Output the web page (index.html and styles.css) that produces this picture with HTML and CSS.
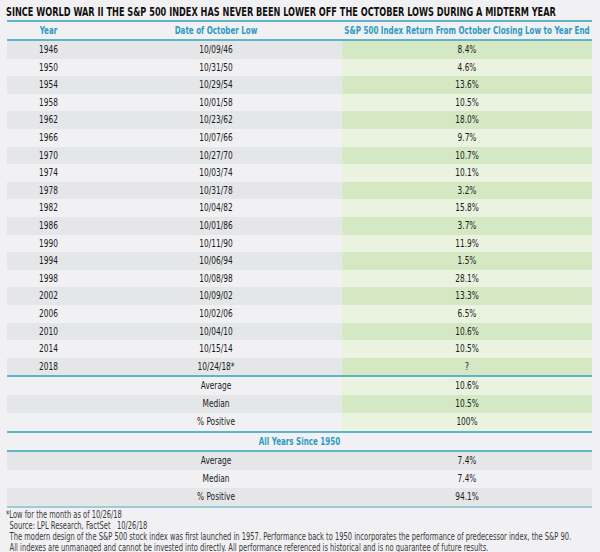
FILE: index.html
```html
<!DOCTYPE html>
<html>
<head>
<meta charset="utf-8">
<link rel="stylesheet" href="styles.css">
</head>
<body>
<div class="page">
  <div class="title">SINCE WORLD WAR II THE S&amp;P 500 INDEX HAS NEVER BEEN LOWER OFF THE OCTOBER LOWS DURING A MIDTERM YEAR</div>
  <div class="table">
    <div class="row head">
      <div>Year</div><div>Date of October Low</div><div>S&amp;P 500 Index Return From October Closing Low to Year End</div>
    </div>
    <div class="data">
      <div class="row dark"><div>1946</div><div>10/09/46</div><div class="g">8.4%</div></div>
      <div class="row"><div>1950</div><div>10/31/50</div><div class="g">4.6%</div></div>
      <div class="row dark"><div>1954</div><div>10/29/54</div><div class="g">13.6%</div></div>
      <div class="row"><div>1958</div><div>10/01/58</div><div class="g">10.5%</div></div>
      <div class="row dark"><div>1962</div><div>10/23/62</div><div class="g">18.0%</div></div>
      <div class="row"><div>1966</div><div>10/07/66</div><div class="g">9.7%</div></div>
      <div class="row dark"><div>1970</div><div>10/27/70</div><div class="g">10.7%</div></div>
      <div class="row"><div>1974</div><div>10/03/74</div><div class="g">10.1%</div></div>
      <div class="row dark"><div>1978</div><div>10/31/78</div><div class="g">3.2%</div></div>
      <div class="row"><div>1982</div><div>10/04/82</div><div class="g">15.8%</div></div>
      <div class="row dark"><div>1986</div><div>10/01/86</div><div class="g">3.7%</div></div>
      <div class="row"><div>1990</div><div>10/11/90</div><div class="g">11.9%</div></div>
      <div class="row dark"><div>1994</div><div>10/06/94</div><div class="g">1.5%</div></div>
      <div class="row"><div>1998</div><div>10/08/98</div><div class="g">28.1%</div></div>
      <div class="row dark"><div>2002</div><div>10/09/02</div><div class="g">13.3%</div></div>
      <div class="row"><div>2006</div><div>10/02/06</div><div class="g">6.5%</div></div>
      <div class="row dark"><div>2010</div><div>10/04/10</div><div class="g">10.6%</div></div>
      <div class="row"><div>2014</div><div>10/15/14</div><div class="g">10.5%</div></div>
      <div class="row dark"><div>2018</div><div>10/24/18*</div><div class="g">?</div></div>
    </div>
    <div class="summary">
      <div class="row sum"><div></div><div>Average</div><div class="g">10.6%</div></div>
      <div class="row sum dark"><div></div><div>Median</div><div class="g">10.5%</div></div>
      <div class="row sum"><div></div><div>% Positive</div><div class="g">100%</div></div>
    </div>
    <div class="section">All Years Since 1950</div>
    <div class="summary2">
      <div class="row sum dark"><div></div><div>Average</div><div>7.4%</div></div>
      <div class="row sum"><div></div><div>Median</div><div>7.4%</div></div>
      <div class="row sum dark"><div></div><div>% Positive</div><div>94.1%</div></div>
    </div>
  </div>
  <div class="notes">
    <p class="first">*Low for the month as of 10/26/18</p>
    <p>Source: LPL Research, FactSet&nbsp;&nbsp;&nbsp;10/26/18</p>
    <p>The modern design of the S&amp;P 500 stock index was first launched in 1957. Performance back to 1950 incorporates the performance of predecessor index, the S&amp;P 90.</p>
    <p>All indexes are unmanaged and cannot be invested into directly. All performance referenced is historical and is no guarantee of future results.</p>
  </div>
</div>
</body>
</html>
```

FILE: styles.css
```css
html, body {
  margin: 0;
  padding: 0;
  background: #f1f1f3;
}
.page {
  width: 600px;
  height: 552px;
  overflow: hidden;
  font-family: "DejaVu Sans Condensed", "DejaVu Sans", sans-serif;
  font-stretch: condensed;
  color: #1a1a1a;
}
/* condensed look: each block is laid out wide and squeezed horizontally */
.title {
  margin: 4px 0 0 6px;
  height: 15px;
  font-weight: bold;
  font-size: 13px;
  line-height: 15px;
  color: #111;
  white-space: nowrap;
  display: inline-block;
  transform: scaleX(0.70);
  transform-origin: left top;
}
.table {
  margin: 0 0 0 7px;
  width: 780px;
  transform: scaleX(0.75);
  transform-origin: left top;
}
.row {
  display: grid;
  grid-template-columns: 14.19% 43.08% 42.73%;
  font-size: 11px;
  line-height: 17.6px;
  height: 17.6px;
  text-align: center;
}
.row > div {
  white-space: nowrap;
}
.head {
  border-top: 2px solid #5fb6cb;
  border-bottom: 2px solid #5fb6cb;
  height: 17px;
  line-height: 17px;
  font-weight: bold;
  color: #2d9ac3;
  font-size: 10.6px;
}
.data .row .g {
  background: #e9f3df;
}
.data .row.dark > div {
  background: #e5e6e8;
}
.data .row.dark .g,
.summary .row.dark .g {
  background: #d5e8c4;
}
.summary .row .g {
  background: #e9f3df;
}
.summary .row.dark > div:not(.g) {
  background: #e5e6e8;
}
.data {
  border-bottom: 2px solid #5fb6cb;
}
.sum {
  height: 18px;
  line-height: 18px;
}
.summary {
  border-bottom: 2px solid #5fb6cb;
}
.section {
  height: 17px;
  line-height: 17px;
  text-align: center;
  font-weight: bold;
  font-size: 10.6px;
  color: #2d9ac3;
  border-bottom: 2px solid #5fb6cb;
}
.summary2 .row.dark {
  background: #e5e6e8;
}
.summary2 {
  border-bottom: 2px solid #9ccdd6;
}
.notes {
  margin: 1px 0 0 6px;
  width: 800px;
  font-size: 10.4px;
  line-height: 11px;
  color: #3a3a3a;
  transform: scaleX(0.72);
  transform-origin: left top;
}
.notes p {
  margin: 0;
  padding-left: 5px;
  white-space: nowrap;
}
.notes p.first {
  padding-left: 0;
}
```
